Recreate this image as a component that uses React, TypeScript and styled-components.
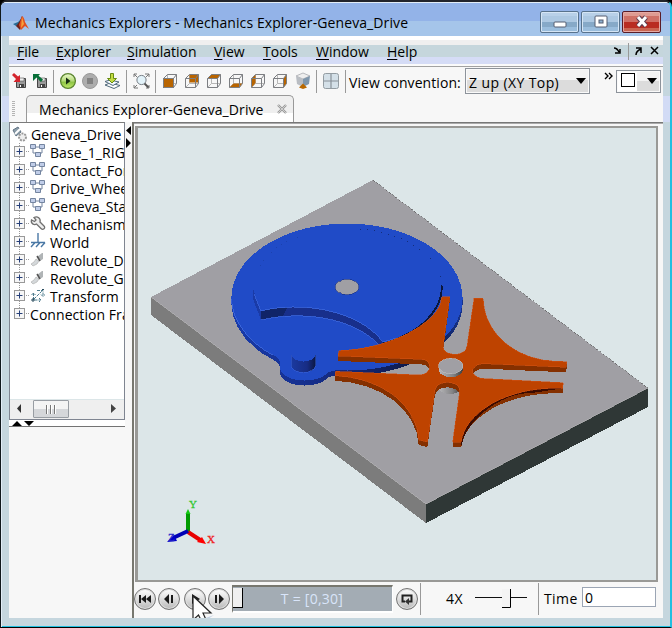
import React from "react";
import styled, { createGlobalStyle } from "styled-components";

const Global = createGlobalStyle`
  * { box-sizing: border-box; }
  body { margin: 0; overflow: hidden; background: #000; }
  svg { display: block; flex: none; }
`;

const Frame = styled.div`
  width: 672px; height: 628px; display: flex; flex-direction: column;
  border: 1px solid #10181c; border-top: 2px solid #22242c; border-radius: 7px 7px 0 0;
  border-right: 2px solid #21bfe0; border-bottom: 1px solid #000;
  background: linear-gradient(#c5d6de 0 94px, #d2dbf5 94px 120px, #c5d6de 120px);
  font-family: "Open Sans", "Noto Sans", sans-serif; font-size: 14px; color: #000;
  box-shadow: inset 1px 1px #e2edf7, inset 0 -1px #21bfe0;
  overflow: hidden;
`;
const TitleBar = styled.header`
  height: 34px; flex: none; display: flex; align-items: center; padding: 7px 9px 0 11px;
  background: linear-gradient(#e2edf7 0 1px, #93b3e8 1px 19px, #a5c5ea 19px);
`;
const Title = styled.h1`
  font: inherit; margin: 0 0 0 5px; flex: 1; white-space: nowrap; letter-spacing: 0.1px; line-height: 18px;
  padding-bottom: 0;
`;
const WindowButtons = styled.div`display: flex; gap: 2px; align-self: flex-start; margin-top: 2px;`;
const WindowButton = styled.button<{ $danger?: boolean }>`
  width: 39px; height: 22px; padding: 0; border: 1px solid ${p => (p.$danger ? "#5a1d28" : "#58728c")}; border-radius: 2px;
  display: grid; place-items: center; box-shadow: inset 0 0 0 1px ${p => (p.$danger ? "#e5aaa5" : "#d5e5f5")};
  background: ${p => (p.$danger
    ? "linear-gradient(#df9b92 0 4px, #cf7066 4px 10px, #b92d22 10px 16px, #ca6652 16px)"
    : "linear-gradient(#b8d0e8 0 4px, #adc8e2 4px 10px, #86a9c8 10px 15px, #9abddd 15px)")};
`;
const Client = styled.main`
  margin: 0 7px 0 8px; width: 654px; height: 582px; flex: none; display: flex; flex-direction: column;
  background: #f7f7f7; overflow: hidden;
`;
const MenuBar = styled.nav`
  height: 31px; flex: none; display: flex; align-items: center; border-bottom: 1px solid #a2a2a2;
  background: linear-gradient(#fff 0 4px, #efefef 4px 9px, #c5d6dc 9px 21px, #d5dcf6 21px 28px, #fafafa 28px);
`;
const MenuItem = styled.span<{ $w: number }>`
  width: ${p => p.$w}px; flex: none; padding-left: 8px; line-height: 20px; margin-top: 1px; white-space: nowrap;
  u { text-underline-offset: 2px; }
`;
const DockTools = styled.div`margin-left: auto; display: flex; align-items: center;`;
const ToolBar = styled.div`height: 28px; flex: none; display: flex; align-items: center; overflow: hidden;`;
const Tools = styled.div<{ $w: number }>`display: flex; width: ${p => p.$w}px; flex: none; padding-left: 2px;`;
const Rule = styled.i<{ $h?: number }>`
  width: 1px; height: ${p => p.$h ?? 23}px; background: #999; flex: none;
`;
const ToolLabel = styled.span`width: 119px; flex: none; padding-left: 3px; white-space: nowrap; line-height: 20px; letter-spacing: 0.08px; margin-top: 3px;`;
const Select = styled.div<{ $w: number; $h: number }>`
  width: ${p => p.$w}px; height: ${p => p.$h}px; flex: none; display: flex; align-items: center; justify-content: space-between;
  border: 1px solid #8d939b; padding: 0 3px; background: linear-gradient(#f3f3f3 0 46%, #dcdcdc 46%); white-space: nowrap;
  box-shadow: inset 0 0 0 1px #fafafa; letter-spacing: 0.4px;
`;
const SelectText = styled.span`padding-top: 2px;`;
const Arrow = styled.i`border: 5px solid transparent; border-top: 6px solid #000; border-bottom: 0;`;
const Swatch = styled.i`
  width: 19px; height: 19px; margin-left: -2px; background: #fff; display: grid; place-items: center; padding-bottom: 3px;
  &::after { content: ""; width: 12px; height: 12px; border: 1.5px solid #000; }
`;
const TabStrip = styled.div`height: 27px; flex: none; display: flex; align-items: flex-end; padding-left: 3px;`;
const Grip = styled.i`
  width: 3px; height: 15px; margin: 0 11px 6px 0; background: repeating-linear-gradient(#b4b4b4 0 1px, transparent 1px 2px);
`;
const Tab = styled.div`
  width: 268px; height: 27px; border: 1px solid #999; border-bottom: 0; border-radius: 5px 5px 0 0;
  background: linear-gradient(#efefef 0 17px, #fff 17px); display: flex; align-items: center; padding: 0 6px 0 12px;
  justify-content: space-between; white-space: nowrap; letter-spacing: 0.09px;
`;
const Body = styled.div`display: flex; flex: 1; min-height: 0;`;
const Side = styled.aside`width: 116px; flex: none; display: flex; flex-direction: column;`;
const TreePanel = styled.div`
  height: 298px; flex: none; border: 1px solid #7f8591; border-top-color: #7b7b7b; background: #fff; display: flex; flex-direction: column; overflow: hidden;
`;
const Tree = styled.ul`list-style: none; margin: 0; padding: 2px 0 0 2px; flex: 1; overflow: hidden; letter-spacing: 0.06px;`;
const TreeRow = styled.li`
  height: 18px; line-height: 19px; display: flex; align-items: center; white-space: nowrap;
`;
const TreeText = styled.span<{ $gap: number }>`padding-left: ${p => p.$gap}px;`;
const ScrollTrack = styled.div`height: 20px; flex: none; background: #efefef; border-top: 1px solid #dce6e8; display: flex; align-items: flex-start;
  > svg { margin-top: 3px; }`;
const ScrollThumb = styled.div`
  width: 36px; height: 18px; margin: 0 41px 0 12px; border: 1px solid #989da3; border-radius: 1px; display: flex; justify-content: center; align-items: center; gap: 2px;
  background: linear-gradient(#f4f4f4 0 50%, #d5d7da 50%);
`;
const ThumbBar = styled.i`width: 2px; height: 9px; background: linear-gradient(90deg, #777 50%, #fff 50%);`;
const HSplit = styled.div`height: 7px; flex: none; border-bottom: 1px solid #737373; padding-left: 2px; background: #fff;`;
const VSplit = styled.div`width: 7px; flex: none; padding-top: 4px;`;
const Right = styled.section`
  flex: 1; min-width: 0; display: flex; flex-direction: column; border-left: 2px solid #77776f; border-top: 1px solid #777;
  box-shadow: inset 0 1px #aaa; padding: 3px 0 3px 1px;
`;
const Viewport = styled.div`
  width: 523px; height: 456px; flex: none; border: solid #999996; border-width: 2px 2px 2px 3px; background: #dce6e8; overflow: hidden;
`;
const Playback = styled.footer`height: 33px; flex: none; display: flex; align-items: center; margin-left: -1px;`;
const RoundButton = styled.button<{ $gap?: number }>`
  width: 22px; height: 22px; border-radius: 50%; border: 1.5px solid #737373; padding: 0; margin-right: ${p => p.$gap ?? 2}px; flex: none;
  display: grid; place-items: center; background: linear-gradient(#fff 0, #e2e2e2 45%, #b8b8b8); box-shadow: inset 0 0 0 1px #ddd; position: relative;
`;
const Timeline = styled.div`
  width: 161px; height: 28px; border: solid #77776f; border-width: 2px 0 0 1px; background: #a3acb4; color: #d9e5fa; flex: none;
  display: flex; align-items: center; border-right: 1px solid #fff; border-bottom: 2px solid #fff; letter-spacing: .25px;
`;
const TimeThumb = styled.i`width: 10px; height: 20px; background: #f0f0f0; border: solid #000; border-width: 0 1px 1px 0; margin-top: -1px;`;
const TimeText = styled.span`flex: 1; text-align: center; padding-right: 11px;`;
const Speed = styled.span`width: 48px; padding-left: 25px; flex: none; letter-spacing: .6px;`;
const TimeLabel = styled.span`padding-left: 5px; width: 43px; flex: none; letter-spacing: .4px;`;
const TimeInput = styled.div`width: 74px; height: 20px; border: 1px solid #9ba5b4; background: #fff; line-height: 20px; padding-left: 2px; margin-top: -3px;`;
const Cursor = styled.svg`position: absolute; left: 7px; top: 6px; z-index: 3; overflow: visible;`;

const MatlabLogo = () => (
  <svg width="18" height="18" viewBox="0 0 18 18">
    <path d="M1 10 6 8 9 5 8 13 4 12Z" fill="#286c95" />
    <path d="M5 11Q8 8 10 2L12 7 8 16 4 12Z" fill="#6c211b" />
    <path d="M10 2Q12 3 13 8L17 15 13 12 9 16 7 11Z" fill="#e15220" />
    <path d="M10 3 12 10 9 14Z" fill="#f6a33b" />
  </svg>
);

const Disk = ({ out }: { out?: boolean }) => (
  <svg width="18" height="18" viewBox="0 0 18 18">
    <path d="M5.5 6.5H14.5V15.5H5.5Z" fill="#999" stroke="#444" />
    <path d="M8 6H13V9H8Z" fill="#eee" stroke="#555" strokeWidth=".6" /><path d="M8 12H13V15H8Z" fill="#444" /><path d="M9 13h1v2H9z" fill="#fff" />
    {out ? <path d="M1 2H8L6.5 3.8 11 7.5 9 10 4.5 5.5 1 9Z" fill="#087039" /> : <path d="M1 3 3 1 7 4.5 9 3V10H2.5L5 7Z" fill="#d4252d" />}
  </svg>
);

type CubeFace = "front" | "back" | "top" | "bottom" | "left" | "right";
const cubeFaces: Record<CubeFace, string> = {
  front: "M2.5 7.5h10v9h-10z",
  back: "M6.5 3.5h9v8h-9z",
  top: "M2.5 7.5 6.5 3.5h9l-3 4z",
  bottom: "M2.5 16.5 6.5 12.5h9l-3 4z",
  left: "M2.5 7.5 6.5 3.5v8.5l-4 4.5z",
  right: "M12.5 7.5 15.5 3.5v9l-3 4z",
};
const Cube = ({ face }: { face: CubeFace }) => (
  <svg width="22" height="20" viewBox="0 0 22 20">
    <path d="M6.5 3.5V12.5H15.5M2.5 16.5 6.5 12.5" fill="none" stroke="#b6b6b6" />
    <path d={cubeFaces[face]} fill="#b86400" stroke={face === "front" ? "#7a4300" : "none"} />
    <path d="M2.5 7.5h10v9h-10zM2.5 7.5 6.5 3.5h9l-3 4M15.5 3.5v9l-3 4" fill="none" stroke="#7c7e82" />
  </svg>
);

const Play = () => (
  <svg width="22" height="20" viewBox="0 0 22 20">
    <defs><linearGradient id="g" x2="0" y2="1"><stop stopColor="#eefcd0" /><stop offset=".45" stopColor="#b9dd80" /><stop offset=".6" stopColor="#8fc546" /><stop offset="1" stopColor="#c4ec6c" /></linearGradient></defs>
    <circle cx="10" cy="10" r="7.4" fill="url(#g)" stroke="#5b8530" strokeWidth="1.3" /><path d="M8 6.5 12.5 10 8 13.5Z" fill="#152a12" />
  </svg>
);
const Stop = () => (
  <svg width="22" height="20" viewBox="0 0 22 20"><circle cx="10" cy="10" r="7.5" fill="#adadad" stroke="#999" /><path d="M7 7h6v6H7z" fill="#828282" /></svg>
);
const Update = () => (
  <svg width="22" height="20" viewBox="0 0 22 20">
    <path d="M3 14 8 12 18 14.5 12 17.5Z" fill="#fff" stroke="#50697b" /><path d="M3 10.5 8 9 17 11 11 14.5Z" fill="#f3f9ff" stroke="#50697b" />
    <path d="M8.5 2.5h3v5h3L10 12 5.5 7.5h3Z" fill="#c4dc43" stroke="#688b13" />
  </svg>
);
const Fit = () => (
  <svg width="22" height="20" viewBox="0 0 22 20" fill="none" stroke="#60656b">
    <path d="M3 6V3H6M3 3 6 6M14 3h4v3M18 3 15 6M3 14v3h4M3 17l3-3M18 14v3h-3" stroke="#777" /><circle cx="10.5" cy="9" r="4.6" fill="#e3f3fa" stroke="#777e85" /><path d="m13.5 12.5 4 4" stroke="#555" strokeWidth="2" />
  </svg>
);
const IsoCube = () => (
  <svg width="22" height="20" viewBox="0 0 22 20">
    <path d="M10 2 17 5 10 8 3 5Z" fill="#eee" stroke="#b7b9bd" /><path d="M3 5 10 8V16L4 13Z" fill="#b9bdc3" /><path d="M10 8 17 5 16 13 10 16Z" fill="#7e96ac" /><path d="M6 16.5 10 12.5 14 16.5 10 18Z" fill="#b96800" />
  </svg>
);
const Panes = () => (
  <svg width="18" height="20" viewBox="0 0 18 20"><rect x="1.5" y="2.5" width="15" height="15" rx="2" fill="#d4e0e8" stroke="#939ca2" /><path d="M9 3v14M2 10h14" stroke="#889098" strokeWidth="1.2" /></svg>
);

type NodeIcon = "block" | "wrench" | "ground" | "joint" | "axes";
const NodeGlyph = ({ kind }: { kind: NodeIcon }) => (
  <svg width="18" height="18" viewBox="0 0 18 18" fill="none">
    {kind === "block" && <g fill="#c0cde8" stroke="#7485a0"><path d="M3 6v4h4M12 6v4H9M6 4h4" fill="none" /><path d="M.5 1.5h5v4h-5zM9.5 1.5h5v4h-5zM5.500 9.500h5v4h-5z" /></g>}
    {kind === "wrench" && <path d="M4 2.500 6 5 4.500 6.500 1.500 5C.5 8.500 4 10.500 6.500 9L11 13.500C13 15.500 16 13 14 11L10 7C11 3.500 7.500.5 4 2.500Z" fill="#eee" stroke="#707070" strokeWidth="1.3" />}
    {kind === "ground" && <path d="M8 0v9M1 9.500h14M5 9.500l-4 4.500M10 9.500l-4 4.500M15 9.500l-4 4.500" stroke="#4a78a5" strokeWidth="1.4" />}
    {kind === "joint" && <g><path d="m7 6 5-4h1v6l-3 2Z" fill="#b0b4b6" /><path d="M6 8 9 10 7 13 3 15 1 13 4 11Z" fill="#d4d8da" stroke="#aaa" strokeWidth=".6" /><path d="m7 5 3 5" stroke="#555" strokeWidth="1.5" /></g>}
    {kind === "axes" && <g stroke="#4d7c8d"><path d="M3.500 6v7h7M1.500 8l2-2 2 2M7 3.500h6v6M11 7.500l2 2 2-2M4 12l8-8M9 11l2 2-2 2" strokeDasharray="3 1" /><path d="M2 12h2v2H2zM12 2.500h2" stroke="#294b5d" /></g>}
  </svg>
);

const nodes: [string, NodeIcon | null][] = [
  ["Base_1_RIGID", "block"], ["Contact_Forces", "block"], ["Drive_Wheel", "block"], ["Geneva_Star", "block"],
  ["Mechanism", "wrench"], ["World", "ground"], ["Revolute_Drive", "joint"], ["Revolute_Geneva", "joint"],
  ["Transform", "axes"], ["Connection Frames", null],
];

const star =
  "M441.7 296.7 449.7 297 443 346C442 356 466 358 467 346L474 298.3 483.3 298.5C484 335 518 361 558 361.3L566.7 361.7 566.3 367.3 484 363.7C469 364 469 378 484 378.5L563.3 382.7 562.7 388.3C506 386 464 414 461.3 442.3L452.7 442 459.7 391C460 380 436 379 434.8 391L427.3 442 418.7 440C417 405 382 378 335 375.7L335.7 371.3 420 375C433 374 433 359 420 359.3L338.3 356 338.7 350.7C393 349 434 322 440 305Z";

const Scene = () => (
  <svg width="519" height="454" viewBox="138 128 519 454" shapeRendering="crispEdges">
    <path d="M151 297 426 504V523L151 315Z" fill="#7c7c7c" />
    <path d="M426 504 648 388V407L426 523Z" fill="#2f3736" />
    <path d="M373 180 648 388 426 504 151 297Z" fill="#a09fa4" />
    <path d="M151 297 426 504 648 388" fill="none" stroke="#b3b3b5" strokeWidth=".7" />
    <path d="M373 180 648 388" fill="none" stroke="#555" strokeWidth=".7" strokeDasharray="2 2" />
    <defs>
      <linearGradient id="rim" x1="231" x2="463" gradientUnits="userSpaceOnUse"><stop stopColor="#193cac" /><stop offset=".5" stopColor="#14287b" /><stop offset=".85" stopColor="#0b163c" /><stop offset="1" stopColor="#173490" /></linearGradient>
      <linearGradient id="pin"><stop stopColor="#1b3aa0" /><stop offset=".65" stopColor="#172c84" /><stop offset="1" stopColor="#0b1740" /></linearGradient>
      <linearGradient id="hub"><stop stopColor="#b9b9bc" /><stop offset=".6" stopColor="#838385" /><stop offset="1" stopColor="#3d3d3d" /></linearGradient>
    </defs>
    {[5, 4, 3, 2, 1, 0].map(d => (
      <path key={d} transform={`translate(0 ${d})`} fill={d ? "url(#rim)" : "#204bc7"}
        d="M231.3 298C231.3 257 283 223.5 347 223.5S462.7 257 462.7 298C462.7 339 411 371 347 370.5 326 369 329 374 321 377.5 306 384 280 380 279.5 366 281 361 279 358 272 354 246 341 231.3 319 231.3 298Z" />
    ))}
    <path d="M231.5 299C232 320 248 342 273 355" fill="none" stroke="#416be1" strokeWidth=".8" />
    <path d="M441 285C443 309 419 333 383 345V342C417 331 437 309 441 285Z" fill="#0a173d" stroke="#0a173d" strokeWidth="3" />
    <path d="M253 289 253 299 261 320 261 311Z" fill="#1a3ba7" />
    <path d="M261 311C299 301 358 309 383 342V345L379 345C354 318 303 310 261 320Z" fill="#182f8b" />
    <path d="M261 311 288 306 283 316 261 320Z" fill="#102467" />
    <path d="M253 289A94 61 0 1 1 383.5 342.5C358 309 299 301 261 311Z" fill="#204bc7" />
    <path d="M254 294 261 311C299 301 358 309 383 342L396 338" fill="none" stroke="#3b66dd" strokeWidth=".8" />
    <path d="M261 320C303 310 354 318 379 345" fill="none" stroke="#3b66dd" strokeWidth=".8" />
    <path d="M360 229C396 231 437 251 441 281" fill="none" stroke="#102569" strokeWidth=".8" strokeDasharray="1 6" />
    <path d="M260 266Q272 246 298 237" fill="none" stroke="#1a3da5" strokeWidth=".7" strokeDasharray="1 5" />
    <ellipse cx="347" cy="287" rx="12" ry="7.8" fill="#a09fa4" stroke="#152e83" strokeWidth=".6" />
    <path d="M291.2 353V365A12.2 7.5 0 0 0 315.7 365V353Z" fill="url(#pin)" stroke="#3b65dc" strokeWidth=".5" />
    <ellipse cx="303.5" cy="354" rx="12.2" ry="7.5" fill="#204bc7" />
    <ellipse cx="450" cy="387" rx="12" ry="7" fill="url(#hub)" />
    {[5, 4, 3, 2, 1].map(d => <path key={d} d={star} transform={`translate(0 ${d})`} fill="#853000" />)}
    <path d="M562.7 388.300C506 386 464 414 461.300 442.300V446C466 418 506 391 532 393Z" fill="#3c0b00" />
    <path d={star} fill="#be4300" stroke="#d45415" strokeWidth=".5" />
    <path d="M438.500 366v3A12 8 0 0 0 463 369V366Z" fill="url(#hub)" />
    <ellipse cx="450.700" cy="366" rx="12.200" ry="7.700" fill="#a09fa4" stroke="#c0c0c2" strokeWidth=".6" />
    <g strokeWidth="3" shapeRendering="auto">
      <path d="M188 532V514" stroke="#009b00" strokeWidth="4" /><path d="M185.500 514 188 509 190.500 514Z" fill="#13c913" />
      <path d="m188 532 13 8.500" stroke="#e80000" strokeWidth="4" /><path d="m202 537 4 7-9-2Z" fill="#f00" />
      <path d="m188 531-14 6.500" stroke="#0000b5" strokeWidth="4" /><path d="m174 535-7 7 10-1Z" fill="#0000c8" />
    </g>
    <g fontFamily="Liberation Serif, serif" fontSize="11">
      <text x="189" y="508" fill="#31c631" stroke="#31c631" strokeWidth=".3">Y</text><text x="207" y="543" fill="#e22" stroke="#e22" strokeWidth=".3">X</text><text x="168" y="541" fill="#2222c2" stroke="#22c" strokeWidth=".3">Z</text>
    </g>
  </svg>
);

const TransportGlyph = ({ d }: { d: string }) => (
  <svg width="16" height="16" viewBox="0 0 16 16"><path d={d} fill="#1a1a1a" /></svg>
);

export default function App() {
  return (
    <>
      <Global />
      <Frame>
        <TitleBar>
          <MatlabLogo />
          <Title>Mechanics Explorers - Mechanics Explorer-Geneva_Drive</Title>
          <WindowButtons>
            <WindowButton><svg width="14" height="14"><rect x="1" y="7" width="12" height="5" rx="1" fill="#fff" stroke="#555d70" /></svg></WindowButton>
            <WindowButton><svg width="14" height="14"><rect x="1" y="1" width="12" height="11" rx="1" fill="#fff" stroke="#555d70" /><rect x="5" y="5" width="4" height="3" fill="#8db0d0" stroke="#555d70" /></svg></WindowButton>
            <WindowButton $danger><svg width="16" height="14"><path d="m4 2 8 9M12 2l-8 9" stroke="#5d3e50" strokeWidth="5" /><path d="m4 2 8 9M12 2l-8 9" stroke="#fff" strokeWidth="3" /></svg></WindowButton>
          </WindowButtons>
        </TitleBar>
        <Client>
          <MenuBar>
            <MenuItem $w={39}><u>F</u>ile</MenuItem><MenuItem $w={71}><u>E</u>xplorer</MenuItem><MenuItem $w={87}><u>S</u>imulation</MenuItem>
            <MenuItem $w={49}><u>V</u>iew</MenuItem><MenuItem $w={53}><u>T</u>ools</MenuItem><MenuItem $w={71}><u>W</u>indow</MenuItem><MenuItem $w={60}><u>H</u>elp</MenuItem>
            <DockTools>
              <svg width="19" height="12"><path d="M5 3Q8 3 10 7M11 4V8H6" fill="none" stroke="#000" strokeWidth="1.5" /></svg>
              <Rule $h={17} />
              <svg width="34" height="12"><path d="M7 10Q7 6 12 4M7 3h5v5" fill="none" stroke="#000" strokeWidth="1.5" /><path d="m22 2 7 7M29 2l-7 7" stroke="#000" strokeWidth="1.5" /></svg>
            </DockTools>
          </MenuBar>
          <ToolBar>
            <Tools $w={44}><Disk /><svg width="3" height="2" /><Disk out /></Tools><Rule />
            <Tools $w={72}><svg width="2" height="2" /><Play /><Stop /><Update /></Tools><Rule />
            <Tools $w={28}><svg width="2" height="2" /><Fit /></Tools><Rule />
            <Tools $w={160}><svg width="3" height="2" />{(["front", "back", "top", "bottom", "left", "right"] as CubeFace[]).map(f => <Cube key={f} face={f} />)}<IsoCube /></Tools><Rule />
            <Tools $w={28}><svg width="3" height="2" /><Panes /></Tools><Rule />
            <ToolLabel>View convention:</ToolLabel>
            <Select $w={125} $h={26}><SelectText>Z up (XY Top)</SelectText><Arrow /></Select>
            <svg width="26" height="20"><path d="m15 2 3 3-3 3M19 2l3 3-3 3" fill="none" stroke="#000" strokeWidth="1.4" /></svg>
            <Select $w={45} $h={23}><Swatch /><Arrow /></Select>
          </ToolBar>
          <TabStrip>
            <Grip />
            <Tab>Mechanics Explorer-Geneva_Drive<svg width="10" height="10"><path d="m1 1 8 8M9 1 1 9" stroke="#999" strokeWidth="2.4" /><path d="m1 1 8 8M9 1 1 9" stroke="#e5e5e5" strokeWidth=".7" /></svg></Tab>
          </TabStrip>
          <Body>
            <Side>
              <TreePanel>
                <Tree>
                  <TreeRow>
                    <svg width="16" height="18"><path d="m1 5 5-3 3 5-5 4Z" fill="#8c9eaa" stroke="#607283" /><path d="m3 9 5-5" stroke="#fff" strokeWidth="2" /><circle cx="10.500" cy="12" r="3.500" fill="#eee" stroke="#999" strokeWidth="2" strokeDasharray="2 1" /></svg>
                    <TreeText $gap={3}>Geneva_Drive</TreeText>
                  </TreeRow>
                  {nodes.map(([name, kind], i) => (
                    <TreeRow key={name}>
                      <svg width={kind ? 18 : 17} height="18">
                        <path d={`M7.5 0V${i === nodes.length - 1 ? 9 : 18}M12 8.5h6`} stroke="#999" strokeDasharray="1 1" />
                        <rect x="2.5" y="3.5" width="10" height="10" fill="#f6f6f6" stroke="#999" /><path d="M4.5 8.5h6M7.5 5.5v6" stroke="#263f78" />
                      </svg>
                      {kind && <NodeGlyph kind={kind} />}
                      <TreeText $gap={kind ? 2 : 1}>{name}</TreeText>
                    </TreeRow>
                  ))}
                </Tree>
                <ScrollTrack>
                  <svg width="11" height="12"><path d="M11 1v9L7 5.5Z" fill="#333" /></svg>
                  <ScrollThumb><ThumbBar /><ThumbBar /><ThumbBar /></ScrollThumb>
                  <svg width="8" height="12"><path d="M1 1v9l5-4.5Z" fill="#444" /></svg>
                </ScrollTrack>
              </TreePanel>
              <HSplit><svg width="24" height="6"><path d="M1 6 6 1l5 5ZM13 1h10l-5 5Z" /></svg></HSplit>
            </Side>
            <VSplit><svg width="6" height="24"><path d="M6 0v9L1 4.5ZM1 12v10l5-5Z" /></svg></VSplit>
            <Right>
              <Viewport><Scene /></Viewport>
              <Playback>
                <RoundButton><TransportGlyph d="M2 4h2v8H2zM9 4v8L4 8zM14 4v8L9 8z" /></RoundButton>
                <RoundButton $gap={4}><TransportGlyph d="M8 3v10L3 8zM10 4h2v8h-2z" /></RoundButton>
                <RoundButton>
                  <TransportGlyph d="M5 3v10l8-5z" />
                  <Cursor width="20" height="29" viewBox="0 0 20 29"><path d="m5 26 5 2 12-8" fill="#9eb7d9" opacity=".55" /><path d="M1 1V25L6.500 20 11 29 15 27 11 18H19Z" fill="#fff" stroke="#252525" strokeWidth="1.2" /></Cursor>
                </RoundButton>
                <RoundButton><TransportGlyph d="M4 4h2v8H4zM8 3v10l5-5z" /></RoundButton>
                <Timeline><TimeThumb /><TimeText>T = [0,30]</TimeText></Timeline>
                <svg width="3" height="2" />
                <RoundButton><svg width="14" height="14"><path d="M5 9.500H2.500v-6h9v6H8" fill="none" stroke="#222" strokeWidth="2" /><path d="M9 6v7L5 9.500Z" fill="#333" /></svg></RoundButton>
                <Rule $h={32} />
                <Speed>4X</Speed>
                <svg width="69" height="22"><path d="M6 9.500h52" stroke="#111" /><path d="M33 1h8v18h-8z" fill="#f4f4f4" /><path d="M41.500 1v18.500H33" fill="none" stroke="#000" /></svg>
                <Rule $h={32} />
                <TimeLabel>Time</TimeLabel><TimeInput>0</TimeInput>
              </Playback>
            </Right>
          </Body>
        </Client>
      </Frame>
    </>
  );
}
